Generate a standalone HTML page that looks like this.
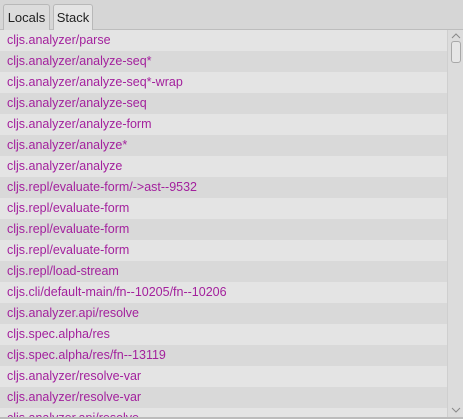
<!DOCTYPE html>
<html><head><style>
html,body{margin:0;padding:0;width:463px;height:419px;overflow:hidden;background:#d4d4d4;font-family:"Liberation Sans",sans-serif;}
.tabs{position:absolute;left:0;top:0;width:463px;height:30px;background:#d6d6d6;border-bottom:1px solid #bdbdbd;box-sizing:border-box;}
.tab{position:absolute;top:4px;height:26px;box-sizing:border-box;border:1px solid #b8b8b8;border-bottom:none;border-radius:3px 3px 0 0;font-size:13px;color:#222;line-height:25px;text-align:center;}
.t1{left:3px;width:47px;background:#dcdcdc;}
.t2{left:53px;width:40px;background:#e4e4e4;}
.list{position:absolute;left:0;top:30px;width:447px;height:387px;overflow:hidden;}
.row{height:21px;line-height:21px;padding-left:7px;font-size:12.5px;color:#a3219d;white-space:nowrap;}
.row:nth-child(odd){background:#e4e4e4}
.row:nth-child(even){background:#d9d9d9}
.sb{position:absolute;left:447px;top:30px;width:16px;height:387px;background:#dcdcdc;border-left:1px solid #cfcfcf;box-sizing:border-box;}
.thumb{position:absolute;left:3px;top:11px;width:10px;height:22px;border:1px solid #a8a8a8;border-radius:3px;background:#e6e6e6;box-sizing:border-box;}
.bot{position:absolute;left:0;top:417px;width:463px;height:2px;background:#bcbcbc;}
</style></head><body>
<div class="tabs"><div class="tab t1">Locals</div><div class="tab t2">Stack</div></div>
<div class="list">
<div class="row">cljs.analyzer/parse</div>
<div class="row">cljs.analyzer/analyze-seq*</div>
<div class="row">cljs.analyzer/analyze-seq*-wrap</div>
<div class="row">cljs.analyzer/analyze-seq</div>
<div class="row">cljs.analyzer/analyze-form</div>
<div class="row">cljs.analyzer/analyze*</div>
<div class="row">cljs.analyzer/analyze</div>
<div class="row">cljs.repl/evaluate-form/-&gt;ast--9532</div>
<div class="row">cljs.repl/evaluate-form</div>
<div class="row">cljs.repl/evaluate-form</div>
<div class="row">cljs.repl/evaluate-form</div>
<div class="row">cljs.repl/load-stream</div>
<div class="row">cljs.cli/default-main/fn--10205/fn--10206</div>
<div class="row">cljs.analyzer.api/resolve</div>
<div class="row">cljs.spec.alpha/res</div>
<div class="row">cljs.spec.alpha/res/fn--13119</div>
<div class="row">cljs.analyzer/resolve-var</div>
<div class="row">cljs.analyzer/resolve-var</div>
<div class="row">cljs.analyzer.api/resolve</div>
</div>
<div class="sb">
<svg style="position:absolute;left:3px;top:3px" width="10" height="6"><path d="M1 5 L5 1 L9 5" stroke="#888" fill="none"/></svg>
<div class="thumb"></div>
<svg style="position:absolute;left:3px;top:377px" width="10" height="6"><path d="M1 1 L5 5 L9 1" stroke="#888" fill="none"/></svg>
</div>
<div class="bot"></div>
</body></html>
